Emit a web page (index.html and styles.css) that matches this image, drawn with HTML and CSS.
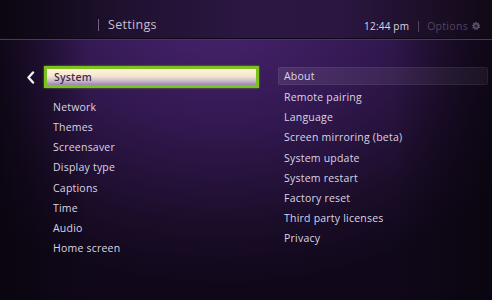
FILE: index.html
```html
<!DOCTYPE html>
<html>
<head>
<meta charset="utf-8">
<link rel="stylesheet" href="styles.css">
</head>
<body>
<div class="screen">
  <header class="topbar">
    <div class="title-wrap">
      <span class="vsep"></span>
      <span class="title">Settings</span>
    </div>
    <div class="status">
      <span class="time">12:44 pm</span>
      <span class="vsep small"></span>
      <span class="options">Options</span>
      <svg class="gear" width="10" height="10" viewBox="0 0 10 10"><path d="M5 0.5 L6 2 L7.8 1.4 L7.6 3.2 L9.4 4 L8.2 5.3 L9.2 6.9 L7.3 7.1 L6.9 9 L5.3 8 L3.8 9.2 L3.3 7.4 L1.4 7.4 L2 5.6 L0.6 4.4 L2.3 3.5 L2 1.7 L3.8 2.1 Z" fill="#5a4d6a"/><circle cx="5" cy="5" r="1.5" fill="#2a1838"/></svg>
    </div>
  </header>
  <main class="content">
    <section class="left">
      <div class="selected-row">
        <svg class="chev" width="9" height="13" viewBox="0 0 9 13"><path d="M7 1.5 L2.5 6.5 L7 11.5" fill="none" stroke="#f2eef6" stroke-width="2.4" stroke-linecap="round" stroke-linejoin="round"/></svg>
        <div class="selected">System</div>
      </div>
      <ul class="menu left-menu">
        <li>Network</li>
        <li>Themes</li>
        <li>Screensaver</li>
        <li>Display type</li>
        <li>Captions</li>
        <li>Time</li>
        <li>Audio</li>
        <li>Home screen</li>
      </ul>
    </section>
    <section class="right">
      <ul class="menu right-menu">
        <li class="focus">About</li>
        <li>Remote pairing</li>
        <li>Language</li>
        <li>Screen mirroring (beta)</li>
        <li>System update</li>
        <li>System restart</li>
        <li>Factory reset</li>
        <li>Third party licenses</li>
        <li>Privacy</li>
      </ul>
    </section>
  </main>
</div>
</body>
</html>
```
FILE: styles.css
```css
html, body {
  margin: 0;
  padding: 0;
  width: 492px;
  height: 300px;
  overflow: hidden;
  background: #10081a;
}
.screen {
  width: 492px;
  height: 300px;
  font-family: "Open Sans", "DejaVu Sans", sans-serif;
  display: flex;
  flex-direction: column;
  background:
    linear-gradient(90deg, rgba(8,4,12,0.75) 0%, rgba(8,4,12,0) 18%, rgba(8,4,12,0) 80%, rgba(8,4,12,0.7) 100%),
    radial-gradient(ellipse 75% 95% at 45% 0%, #4a2472 0%, #321850 45%, #1a0d28 80%, #10081a 100%);
}
.topbar {
  height: 39px;
  flex: none;
  display: flex;
  align-items: flex-end;
  justify-content: space-between;
  padding: 0 11px 5px 98px;
  box-sizing: border-box;
  background: linear-gradient(90deg, #0b0610 0%, #1f1130 25%, #2b1742 50%, #2a1640 70%, #110915 100%);
  border-bottom: 1px solid #0f0818;
  box-shadow: 0 1px 0 #4a3862;
}
.title-wrap, .status {
  display: flex;
  align-items: center;
}
.vsep {
  width: 1px;
  height: 12px;
  background: #6f6080;
  margin-right: 9px;
}
.vsep.small {
  height: 11px;
  margin: 0 8px 0 9px;
  background: #4f4360;
}
.title {
  color: #c8bfd2;
  font-size: 12.5px;
  letter-spacing: 0.3px;
  line-height: 17px;
}
.time {
  color: #dcd6e2;
  font-size: 10px;
  letter-spacing: 0.2px;
  line-height: 14px;
}
.options {
  color: #524562;
  font-size: 10.5px;
  letter-spacing: 0.3px;
  line-height: 14px;
  margin-right: 3px;
}
.gear {
  display: block;
}
.content {
  flex: 1;
  display: flex;
  padding-top: 27px;
}
.left {
  width: 259px;
  padding-left: 26px;
  box-sizing: border-box;
}
.selected-row {
  display: flex;
  align-items: center;
}
.chev {
  display: block;
  margin-right: 9px;
}
.selected {
  flex: 1;
  height: 22px;
  box-sizing: border-box;
  border: 3px solid #7dc11e;
  padding-left: 7px;
  display: flex;
  align-items: center;
  font-size: 10.5px;
  font-weight: 600;
  letter-spacing: 0.2px;
  color: #3b2b55;
  background: linear-gradient(180deg, #fff3d9 0%, #f5e6d0 45%, #c9b9cc 75%, #9a86ad 100%);
  box-shadow: 0 0 2px rgba(140, 220, 40, 0.6);
}
.menu {
  list-style: none;
  margin: 0;
  padding: 0;
}
.menu li {
  height: 20.15px;
  line-height: 20px;
  font-size: 10.5px;
  letter-spacing: 0.22px;
  color: #dcd4e2;
  white-space: nowrap;
}
.left-menu {
  margin-top: 9px;
  padding-left: 27px;
}
.right {
  flex: 1;
  padding-left: 19px;
  padding-right: 4px;
  margin-top: 1px;
}
.right-menu li {
  padding-left: 6px;
  border-radius: 2px;
}
.right-menu li.focus {
  background: linear-gradient(90deg, rgba(255,255,255,0.09), rgba(255,255,255,0.05));
  box-shadow: inset 0 0 0 1px rgba(255,255,255,0.06);
  height: 18px;
  line-height: 18px;
  margin-bottom: 2.15px;
}
```
